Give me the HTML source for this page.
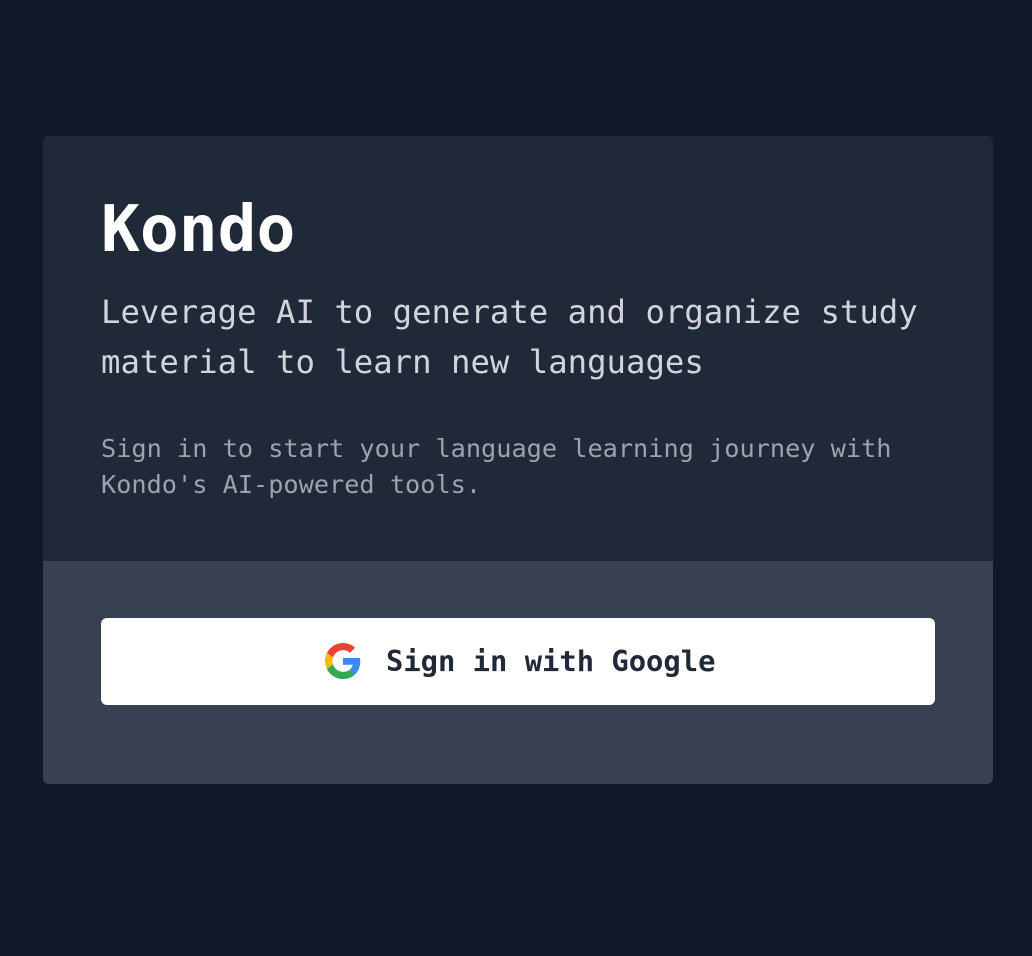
<!DOCTYPE html>
<html><head><meta charset="utf-8"><style>
html,body{margin:0;padding:0;background:#111827;width:1032px;height:956px;overflow:hidden}
body{font-family:"DejaVu Sans Mono","Liberation Mono",monospace}
.card{position:absolute;left:43px;top:136px;width:950px;height:648px;border-radius:6px;overflow:hidden;background:#374151}
.top{position:absolute;left:0;top:0;width:950px;height:425px;background:#1f2937}
h1{position:absolute;left:58px;top:54px;margin:0;font-size:64.6px;line-height:80px;color:#fff;font-weight:bold}
.sub{position:absolute;left:58px;top:151px;margin:0;font-size:32.3px;line-height:50px;color:#d1d5db;width:880px}
.small{position:absolute;left:58px;top:295px;margin:0;font-size:25.25px;line-height:36px;color:#9ca3af;width:880px}
.btn{position:absolute;left:58px;top:482px;width:834px;height:87px;background:#fff;border-radius:6px}
.btn svg{position:absolute;left:224px;top:25px}
.btn span{position:absolute;left:285px;top:0;line-height:87px;font-size:28.8px;font-weight:bold;color:#1f2937}
</style></head><body>
<div class="card">
<div class="top">
<h1>Kondo</h1>
<p class="sub">Leverage AI to generate and organize study material to learn new languages</p>
<p class="small">Sign in to start your language learning journey with Kondo's AI-powered tools.</p>
</div>
<div class="btn">
<svg width="36" height="36" viewBox="0 0 48 48"><path fill="#EA4335" d="M24 9.5c3.54 0 6.710 1.22 9.21 3.6l6.85-6.850C35.9 2.38 30.47 0 24 0 14.62 0 6.51 5.38 2.56 13.22l7.98 6.19C12.43 13.72 17.74 9.5 24 9.5z"/><path fill="#4285F4" d="M46.98 24.55c0-1.57-.15-3.09-.38-4.55H24v9.02h12.94c-.58 2.96-2.26 5.48-4.78 7.18l7.73 6c4.51-4.18 7.09-10.36 7.09-17.65z"/><path fill="#FBBC05" d="M10.53 28.59c-.48-1.45-.76-2.99-.76-4.59s.27-3.14.76-4.59l-7.98-6.19C.92 16.46 0 20.12 0 24c0 3.88.92 7.54 2.56 10.78l7.97-6.19z"/><path fill="#34A853" d="M24 48c6.48 0 11.93-2.13 15.89-5.81l-7.73-6c-2.15 1.45-4.92 2.3-8.16 2.3-6.260 0-11.57-4.22-13.47-9.91l-7.98 6.19C6.51 42.62 14.62 48 24 48z"/></svg>
<span>Sign in with Google</span>
</div>
</div>
</body></html>
